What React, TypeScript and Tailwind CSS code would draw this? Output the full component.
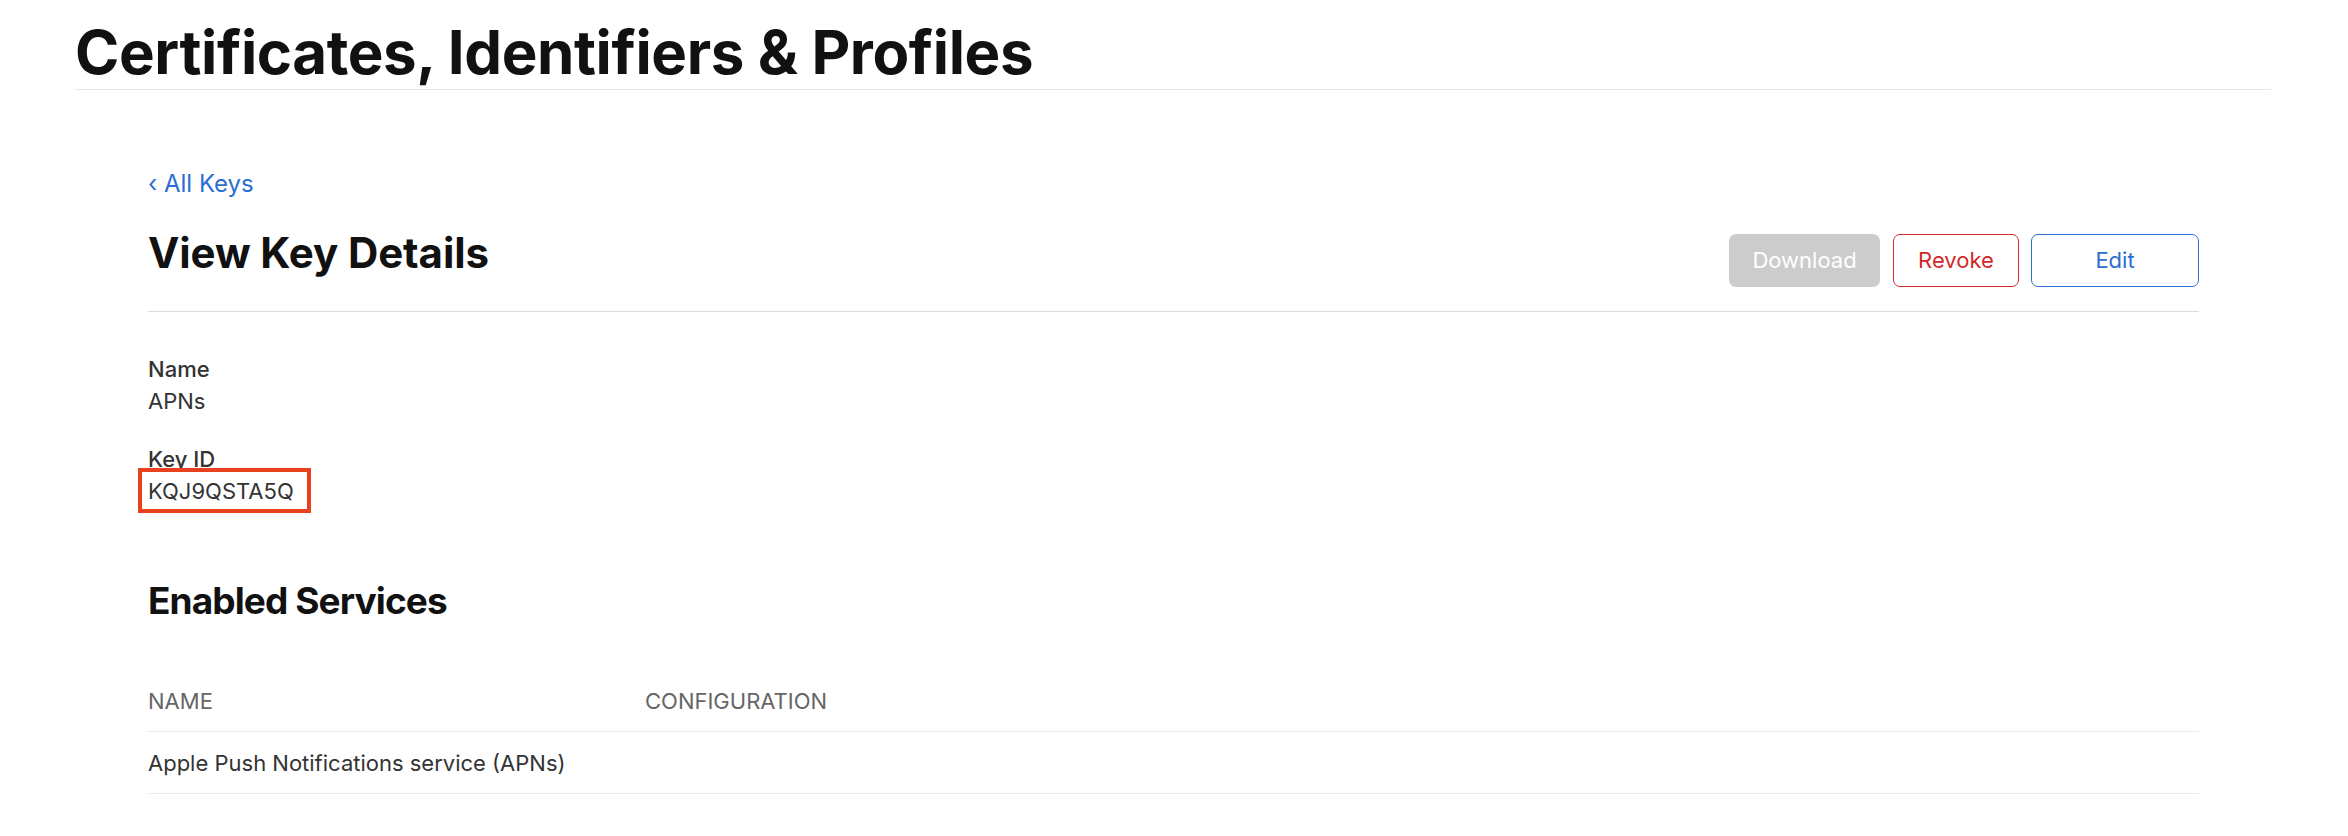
import React from "react";

export default function App() {
  return (
    <div className="min-h-[836px] w-full bg-white font-[Inter,sans-serif] text-[#333]">
      <div className="pl-[75px] pr-[77px]">
        <header className="border-b border-[#e6e6e6] pt-[22px] pb-[7px]">
          <h1 className="text-[60px] leading-[60px] font-bold text-[#111] tracking-[-0.4px]">
            Certificates, Identifiers &amp; Profiles
          </h1>
        </header>

        <main className="pl-[73px] pr-[72px] pt-[78px]">
          <a className="block text-[24px] leading-[32px] text-[#2a6ecf] cursor-pointer">
            ‹ All Keys
          </a>

          <div className="mt-[27px] flex items-start justify-between border-b border-[#dcdcdc] pb-[24px]">
            <h2 className="text-[42px] leading-[52px] font-bold text-[#111] tracking-[-0.1px]">
              View Key Details
            </h2>
            <div className="mt-[7px] flex">
              <button className="h-[53px] w-[151px] rounded-[7px] bg-[#cccccc] text-[22px] text-white">
                Download
              </button>
              <button className="ml-[13px] h-[53px] w-[126px] rounded-[7px] border border-[#d52b2b] text-[22px] text-[#d12a2a]">
                Revoke
              </button>
              <button className="ml-[12px] h-[53px] w-[168px] rounded-[7px] border border-[#2b6fd0] text-[22px] text-[#2a6ecf]">
                Edit
              </button>
            </div>
          </div>

          <dl className="mt-[41px] text-[22px] leading-[32px]">
            <dt className="font-medium">Name</dt>
            <dd>APNs</dd>
            <dt className="mt-[26px] font-medium">Key ID</dt>
            <dd>
              <span className="relative inline-block">
                KQJ9QSTA5Q
                <span className="absolute top-[-7px] left-[-10px] h-[45px] w-[173px] border-[4px] border-[#e8411e]" />
              </span>
            </dd>
          </dl>

          <h3 className="mt-[70px] text-[37px] leading-[48px] font-bold text-[#111] tracking-[-0.9px]">
            Enabled Services
          </h3>

          <div className="mt-[60px] text-[22px] leading-[32px]">
            <div className="flex border-b border-[#ebebeb] pb-[14px] text-[#666]">
              <div className="w-[497px]">NAME</div>
              <div>CONFIGURATION</div>
            </div>
            <div className="flex border-b border-[#ebebeb] pt-[15px] pb-[14px]">
              <div className="w-[497px]">Apple Push Notifications service (APNs)</div>
              <div></div>
            </div>
          </div>
        </main>
      </div>
    </div>
  );
}
